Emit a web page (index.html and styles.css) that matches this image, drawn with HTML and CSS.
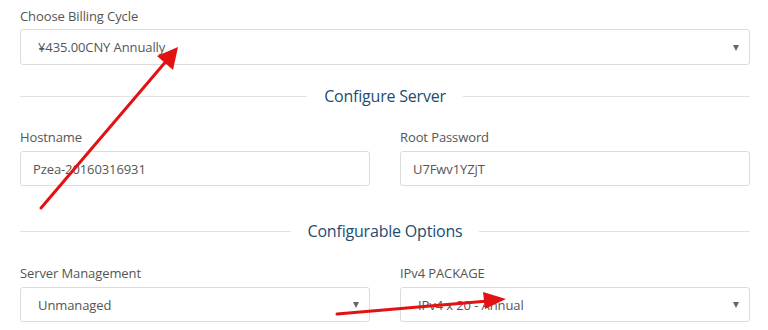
FILE: index.html
```html
<!DOCTYPE html>
<html>
<head>
<meta charset="utf-8">
<link rel="stylesheet" href="styles.css">
</head>
<body>
<div class="page">
  <div class="field">
    <div class="label">Choose Billing Cycle</div>
    <div class="select"><span>¥435.00CNY Annually</span><i class="caret"></i></div>
  </div>

  <div class="section s1"><span class="line"></span><h3>Configure Server</h3><span class="line"></span></div>

  <div class="row r1">
    <div class="field">
      <div class="label">Hostname</div>
      <div class="input">Pzea-20160316931</div>
    </div>
    <div class="field">
      <div class="label">Root Password</div>
      <div class="input">U7Fwv1YZjT</div>
    </div>
  </div>

  <div class="section s2"><span class="line"></span><h3>Configurable Options</h3><span class="line"></span></div>

  <div class="row r2">
    <div class="field">
      <div class="label">Server Management</div>
      <div class="select"><span>Unmanaged</span><i class="caret"></i></div>
    </div>
    <div class="field">
      <div class="label">IPv4 PACKAGE</div>
      <div class="select"><span>IPv4 x 20 - Annual</span><i class="caret"></i></div>
    </div>
  </div>

  <svg class="marks" width="768" height="330" viewBox="0 0 768 330">
    <line x1="41" y1="208" x2="168" y2="59" stroke="#e31212" stroke-width="3" stroke-linecap="round"/>
    <polygon points="178,47 173,70 157,56" fill="#e31212"/>
    <line x1="337" y1="314" x2="488" y2="301" stroke="#e31212" stroke-width="3" stroke-linecap="round"/>
    <polygon points="506,299 485,309 483,292" fill="#e31212"/>
  </svg>
</div>
</body>
</html>
```

FILE: styles.css
```css
* { box-sizing: border-box; }
html, body { margin: 0; padding: 0; background: #fff; }
body {
  font-family: "Open Sans", "Noto Sans", sans-serif;
  color: #555;
  width: 768px;
  height: 330px;
  overflow: hidden;
}
.page {
  position: relative;
  padding: 7px 18px 0 20px;
  height: 330px;
}
.label {
  font-size: 13px;
  line-height: 18px;
  color: #555;
  margin-bottom: 4px;
  letter-spacing: -0.1px;
}
.select, .input {
  display: flex;
  align-items: center;
  border: 1px solid #dcdcdc;
  border-radius: 3px;
  font-size: 13px;
  color: #555;
  background: #fff;
  letter-spacing: -0.1px;
}
.select {
  height: 36px;
  padding: 0 10px 0 17px;
  justify-content: space-between;
}
.input {
  height: 35px;
  padding: 0 12px;
}
.caret {
  width: 0;
  height: 0;
  border-left: 3.5px solid transparent;
  border-right: 3.5px solid transparent;
  border-top: 6px solid #666;
  margin-top: 1px;
}
.section {
  display: flex;
  align-items: center;
  height: 24px;
}
.section .line {
  flex: 1;
  height: 1px;
  background: #e2e2e2;
}
.section h3 {
  margin: 0 17px;
  font-weight: normal;
  font-size: 16px;
  color: #1d4c70;
  line-height: 24px;
  letter-spacing: -0.2px;
}
.s1 { margin-top: 19px; }
.s2 { margin-top: 33px; }
.row {
  display: grid;
  grid-template-columns: 350px 350px;
  column-gap: 30px;
}
.r1 { margin-top: 20px; }
.r1 .label { margin-bottom: 5px; }
.r2 { margin-top: 21px; }
.r2 .label { margin-bottom: 5px; }
.r2 .select { height: 35px; }
.marks {
  position: absolute;
  left: 0;
  top: 0;
  pointer-events: none;
}
```
